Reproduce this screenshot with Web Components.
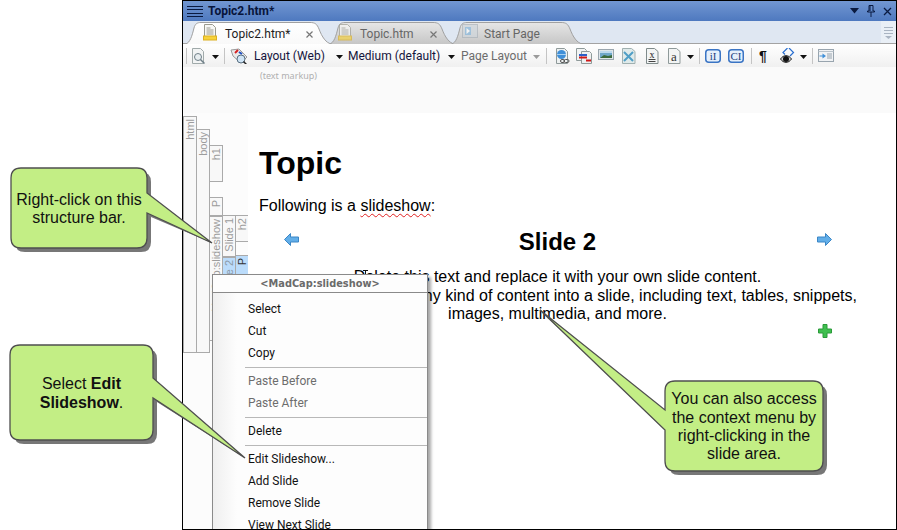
<!DOCTYPE html>
<html>
<head>
<meta charset="utf-8">
<title>Topic2.htm</title>
<style>
  html, body { margin: 0; height: 100%; background: #fff; overflow: hidden; }
  body { position: relative; font-family: "Liberation Sans", Arial, sans-serif; }
</style>
</head>
<body>
<app-window>
  <title-bar slot="top">Topic2.htm*</title-bar>
  <tab-strip slot="top">
    <doc-tab active w="147" icon="page" pad="40" close="120" style="margin-left:2px">Topic2.htm*</doc-tab>
    <doc-tab w="126" icon="page" pad="31" close="100" style="margin-left:-3px">Topic.htm</doc-tab>
    <doc-tab w="132" icon="start" pad="33" close="0" style="margin-left:-4px">Start Page</doc-tab>
  </tab-strip>
  <tool-bar slot="top">
    <tb-sep style="margin-left:3px"></tb-sep>
    <tb-icon name="find" style="margin-left:5px"></tb-icon>
    <tb-arrow style="margin-left:7px"></tb-arrow>
    <tb-sep style="margin-left:5px"></tb-sep>
    <tb-icon name="tag" style="margin-left:5px"></tb-icon>
    <tb-text w="82" style="margin-left:6px">Layout (Web)</tb-text>
    <tb-arrow></tb-arrow>
    <tb-text w="100" style="margin-left:5px">Medium (default)</tb-text>
    <tb-arrow></tb-arrow>
    <tb-text w="72" off style="margin-left:6px">Page Layout</tb-text>
    <tb-arrow off></tb-arrow>
    <tb-sep style="margin-left:6px"></tb-sep>
    <tb-icon name="link" style="margin-left:7px"></tb-icon>
    <tb-icon name="move" style="margin-left:6px"></tb-icon>
    <tb-icon name="image" style="margin-left:6px"></tb-icon>
    <tb-icon name="cross" style="margin-left:8px"></tb-icon>
    <tb-icon name="x" style="margin-left:10px"></tb-icon>
    <tb-icon name="a" style="margin-left:9px"></tb-icon>
    <tb-arrow style="margin-left:6px"></tb-arrow>
    <tb-sep style="margin-left:5px"></tb-sep>
    <tb-icon name="ii" style="margin-left:5px"></tb-icon>
    <tb-icon name="ci" style="margin-left:7px"></tb-icon>
    <tb-sep style="margin-left:7px"></tb-sep>
    <tb-icon name="para" style="margin-left:7px"></tb-icon>
    <tb-icon name="eye" style="margin-left:13px"></tb-icon>
    <tb-arrow style="margin-left:4px"></tb-arrow>
    <tb-sep style="margin-left:5px"></tb-sep>
    <tb-icon name="panel" style="margin-left:5px"></tb-icon>
  </tool-bar>
  <markup-strip slot="top">(text markup)</markup-strip>
  <structure-bars slot="side">
    <bar-col>
      <struct-bar top="3" h="237">html</struct-bar>
    </bar-col>
    <bar-col>
      <struct-bar top="16" h="224">body</struct-bar>
    </bar-col>
    <bar-col>
      <struct-bar top="32" h="37">h1</struct-bar>
      <struct-bar top="15" h="19">P</struct-bar>
      <struct-bar top="0" h="125">MadCap:slideshow</struct-bar>
    </bar-col>
    <bar-col>
      <struct-bar top="102" h="42">Slide 1</struct-bar>
      <struct-bar top="0" h="40" on>Slide 2</struct-bar>
    </bar-col>
    <bar-col>
      <struct-bar top="102" h="27">h2</struct-bar>
      <struct-bar top="13" h="40" on dark>P</struct-bar>
    </bar-col>
  </structure-bars>
  <topic-page slot="main">
    <span slot="title">Topic</span>
    <span slot="intro">Following is a <u>slideshow</u>:</span>
    <span slot="slide">Slide 2</span>
    <span slot="text">D<text-caret></text-caret>elete this text and replace it with your own slide content.<br>You can place almost any kind of content into a slide, including text, tables, snippets,<br>images, multimedia, and more.</span>
  </topic-page>
  <context-menu slot="over" heading="&lt;MadCap:slideshow&gt;">
    <menu-item>Select</menu-item>
    <menu-item>Cut</menu-item>
    <menu-item>Copy</menu-item>
    <menu-sep></menu-sep>
    <menu-item off>Paste Before</menu-item>
    <menu-item off>Paste After</menu-item>
    <menu-sep></menu-sep>
    <menu-item>Delete</menu-item>
    <menu-sep></menu-sep>
    <menu-item>Edit Slideshow...</menu-item>
    <menu-item>Add Slide</menu-item>
    <menu-item>Remove Slide</menu-item>
    <menu-item>View Next Slide</menu-item>
  </context-menu>
</app-window>

<call-out x="11" y="168" w="136" h="80" side="right" p1="25" p2="45" tipx="212" tipy="243">Right-click on this<br>structure bar.</call-out>
<call-out x="10" y="345" w="143" h="95" side="right" p1="33" p2="53" tipx="245" tipy="458">Select <b>Edit<br>Slideshow</b>.</call-out>
<call-out x="665" y="381" w="158" h="90" side="left" p1="29" p2="49" tipx="540" tipy="310">You can also access<br>the context menu by<br>right-clicking in the<br>slide area.</call-out>

<script>
const uiFont = 'Roboto, "Noto Sans", sans-serif';

class AppWindow extends HTMLElement {
  constructor() {
    super();
    this.attachShadow({ mode: "open" });
    this.shadowRoot.innerHTML = `
      <style>
        :host { display: flex; flex-direction: column; position: relative; box-sizing: border-box;
          width: 715px; height: 530px; margin-left: 182px; border: 1px solid #000; overflow: hidden; background: #fff; }
        .body { flex: 1; display: flex; min-height: 0; }
      </style>
      <slot name="top"></slot>
      <div class="body"><slot name="side"></slot><slot name="main"></slot></div>
      <slot name="over"></slot>
    `;
  }
}
customElements.define("app-window", AppWindow);

class TitleBar extends HTMLElement {
  constructor() {
    super();
    this.attachShadow({ mode: "open" });
    this.shadowRoot.innerHTML = `
      <style>
        :host { display: flex; align-items: center; height: 20px; flex: none; color: #07143a;
          background: linear-gradient(#7297d2, #4e79bf); font: bold 12px ${uiFont}; }
        .menu { margin: 0 5px 0 4px; }
        .grow { flex: 1; }
        .btns { display: flex; gap: 8px; margin-right: 4px; align-items: center; }
      </style>
      <svg class="menu" width="16" height="13" viewBox="0 0 16 13"><path d="M0 1.500h16M0 4.500h16M0 8.500h16M0 11.500h16" stroke="#0a1a40" stroke-width="1" fill="none"/></svg>
      <slot></slot>
      <span class="grow"></span>
      <div class="btns">
        <svg width="9" height="6" viewBox="0 0 9 6"><path d="M0 0h9L4.500 5.500z" fill="#0a1a40"/></svg>
        <svg width="8" height="12" viewBox="0 0 8 12"><path d="M2 .5h4v5.500h1.500v1h-7v-1H2zM4 7v5M3 1v5" stroke="#0a1a40" fill="none"/></svg>
        <svg width="9" height="9" viewBox="0 0 9 9"><path d="M1 1l7 7M8 1l-7 7" stroke="#0a1a40" stroke-width="1.300" fill="none"/></svg>
      </div>
    `;
  }
}
customElements.define("title-bar", TitleBar);

class TabStrip extends HTMLElement {
  constructor() {
    super();
    this.attachShadow({ mode: "open" });
    this.shadowRoot.innerHTML = `
      <style>
        :host { display: flex; align-items: flex-end; height: 23px; flex: none; background: #dfe7f2;
          box-shadow: inset 0 -1px 0 #a3a3a3; }
        .grow { flex: 1; }
        .more { width: 15px; height: 22px; background: #e9eff6; display: flex; align-items: center; justify-content: center; margin-bottom: 1px; }
      </style>
      <slot></slot>
      <span class="grow"></span>
      <div class="more">
        <svg width="9" height="14" viewBox="0 0 9 14"><path d="M0 2.500h9M0 5.500h9M0 8.500h9" stroke="#a9b4c2"/><path d="M1 11h7l-3.500 3z" fill="#a9b4c2"/></svg>
      </div>
    `;
  }
}
customElements.define("tab-strip", TabStrip);

const tabIcons = {
  page: `<svg width="14" height="17" viewBox="0 0 14 17"><path d="M1.500.5h8l3 3v9h-11z" fill="#f7f7f5" stroke="#9a9a8e"/><path d="M3.500 4h4M3.500 6h7M3.500 8h7M3.500 10h7" stroke="#9b9b90"/><rect x=".5" y="12" width="13" height="4" fill="#f7d23a" stroke="#dcb020"/></svg>`,
  start: `<svg width="16" height="14" viewBox="0 0 16 14"><rect x=".5" y=".5" width="15" height="13" fill="#cfd6dc" stroke="#a8b0b8"/><rect x="3" y="3" width="6" height="8" fill="#7fb4dd"/><path d="M4.500 4l3.500 3-3.500 3z" fill="#fff"/></svg>`,
};

class DocTab extends HTMLElement {
  constructor() {
    super();
    this.attachShadow({ mode: "open" });
  }
  connectedCallback() {
    const w = +this.getAttribute("w");
    const active = this.hasAttribute("active");
    const id = active ? "on" : "off";
    const close = +this.getAttribute("close");
    this.shadowRoot.innerHTML = `
      <style>
        :host { display: block; position: relative; flex: none; height: 22px; width: ${w}px; z-index: ${active ? 2 : 1};
          font: 12px ${uiFont}; color: ${active ? "#1c1c1c" : "#666"}; }
        svg.bg { position: absolute; left: 0; top: 0; }
        .row { position: relative; display: flex; align-items: center; height: 100%; box-sizing: border-box; padding-top: 2px; }
        .ico { position: absolute; left: ${+this.getAttribute("pad") - 22}px; top: 2px; ${active ? "" : "opacity:.65;"} }
        .label { margin-left: ${this.getAttribute("pad")}px; }
        .x { position: absolute; left: ${close}px; top: 1px; width: 9px; font-size: 0; height: 100%; display: flex; align-items: center; }
      </style>
      <svg class="bg" width="${w}" height="22" viewBox="0 0 ${w} 22">
        <defs><linearGradient id="${id}" x1="0" y1="0" x2="0" y2="1">
          <stop offset="0" stop-color="${active ? "#fff" : "#e6e6e6"}"/>
          <stop offset="1" stop-color="${active ? "#f9f9f9" : "#c6c6c6"}"/>
        </linearGradient></defs>
        <path d="M.5 22C5 21 7 14 9 6C10 2 12 .5 16 .5H${w - 22}C${w - 17} .5 ${w - 15} 2 ${w - 13} 7C${w - 10} 15 ${w - 6} 21 ${w - .5} 22"
          fill="url(#${id})" stroke="#a0a0a0"/>
      </svg>
      <div class="row">
        <span class="ico">${tabIcons[this.getAttribute("icon")]}</span>
        <span class="label"><slot></slot></span>
        ${close ? `<span class="x"><svg width="9" height="9" viewBox="0 0 9 9"><path d="M1.500 1.500l6 6M7.500 1.500l-6 6" stroke="#777" stroke-width="1.200"/></svg></span>` : ""}
      </div>
    `;
  }
}
customElements.define("doc-tab", DocTab);

class ToolBar extends HTMLElement {
  constructor() {
    super();
    this.attachShadow({ mode: "open" });
    this.shadowRoot.innerHTML = `
      <style>
        :host { display: flex; align-items: center; height: 23px; flex: none; background: linear-gradient(#fff, #f0f0f0); }
      </style>
      <slot></slot>
    `;
  }
}
customElements.define("tool-bar", ToolBar);

class TbSep extends HTMLElement {
  constructor() {
    super();
    this.attachShadow({ mode: "open" });
    this.shadowRoot.innerHTML = `<style>:host { display: block; flex: none; width: 1px; height: 16px; background: #c4c4c4; }</style>`;
  }
}
customElements.define("tb-sep", TbSep);

class TbArrow extends HTMLElement {
  constructor() {
    super();
    this.attachShadow({ mode: "open" });
  }
  connectedCallback() {
    const c = this.hasAttribute("off") ? "#9a9a9a" : "#111";
    this.shadowRoot.innerHTML = `<style>:host { display: block; flex: none; width: 7px; height: 4px; line-height: 0; }</style>
      <svg width="7" height="4" viewBox="0 0 7 4"><path d="M0 0h7L3.500 4z" fill="${c}"/></svg>`;
  }
}
customElements.define("tb-arrow", TbArrow);

class TbText extends HTMLElement {
  constructor() {
    super();
    this.attachShadow({ mode: "open" });
  }
  connectedCallback() {
    this.shadowRoot.innerHTML = `<style>:host { display: block; flex: none; width: ${this.getAttribute("w")}px; white-space: nowrap;
      font: 12px ${uiFont}; color: ${this.hasAttribute("off") ? "#6c6c6c" : "#14143c"}; }</style><slot></slot>`;
  }
}
customElements.define("tb-text", TbText);

const page = `<path d="M2.500.5h8l3 3v12h-11z" fill="#eef1f1" stroke="#8f9a9a"/>`;
const toolIcons = {
  find: [13, `<path d="M.5.500h8l3 3v12h-11z" fill="#f2f4f4" stroke="#a0aaaa"/><circle cx="6" cy="9" r="3.500" fill="#e8eef0" stroke="#6f7f88"/><path d="M8.500 11.500l4 4" stroke="#6f7f88" stroke-width="1.500"/>`],
  tag: [18, `<path d="M1 2l8-1 8 8-6 6-8-7z" fill="#e9e9e9" stroke="#9a9a9a"/><circle cx="11" cy="11" r="4" fill="#cfe4f5" stroke="#5a6f80"/><path d="M5 5l3-3" stroke="#d42020" stroke-width="2"/><path d="M9 4l3 2" stroke="#2050c0" stroke-width="2"/><path d="M13.500 13.500l3 3" stroke="#222" stroke-width="1.500"/>`],
  link: [16, page + `<circle cx="7.500" cy="6.500" r="4.500" fill="#3f8fd8"/><path d="M3 6.500h9" stroke="#a9d0f0"/><rect x="6.500" y="11.500" width="4" height="3" rx="1.500" fill="none" stroke="#555"/><rect x="10" y="11.500" width="5" height="3" rx="1.500" fill="none" stroke="#555"/>`],
  move: [16, `<path d="M.5.500h8l2 2v10h-10z" fill="#f2f4f4" stroke="#8f9a9a"/><path d="M5.500 3.500h8l2 2v10h-10z" fill="#eef1f1" stroke="#8f9a9a"/><path d="M3 7h8" stroke="#2b5fc8" stroke-width="2"/><path d="M3 9.500h8" stroke="#d01818" stroke-width="2"/><path d="M10 12.500h5" stroke="#d01818" stroke-width="2"/>`],
  image: [16, `<rect x=".5" y="1.500" width="15" height="10" fill="#dfe6ea" stroke="#9aa6ae"/><rect x="2" y="3" width="12" height="7" fill="#6fa7c9"/><path d="M2 10l4-3 4 1 4-1v3z" fill="#3b6a3c"/><path d="M2 3h12v2H2z" fill="#bcd9ee"/>`],
  cross: [14, `<path d="M.5.500h9l3.500 3v12H.5z" fill="#dfeaea" stroke="#a0b0b0"/><path d="M2 4l9 9M11 4l-9 9" stroke="#4f9ec6" stroke-width="2"/>`],
  x: [13, `<path d="M.5.500h8l3.500 3v12H.5z" fill="#f2f4f4" stroke="#7f8a8a"/><text x="6" y="10" font-family="Liberation Serif" font-size="10" text-anchor="middle" fill="#222">x</text><path d="M2.500 11.500h7M2.500 13.500h7" stroke="#444"/>`],
  a: [13, `<path d="M.5.500h8l3.500 3v12H.5z" fill="#f2f4f4" stroke="#8f9a9a"/><text x="6" y="13" font-family="Liberation Serif" font-size="13" text-anchor="middle" fill="#333">a</text>`],
  ii: [16, `<rect x=".75" y="1.750" width="14.500" height="12.500" rx="3" fill="#e6f0fb" stroke="#3a74c4" stroke-width="1.500"/><text x="8" y="12" font-family="Liberation Serif" font-size="11" text-anchor="middle" fill="#1c3f80">iI</text>`],
  ci: [16, `<rect x=".75" y="1.750" width="14.500" height="12.500" rx="3" fill="#e6f0fb" stroke="#3a74c4" stroke-width="1.500"/><text x="8" y="12" font-family="Liberation Serif" font-size="11" text-anchor="middle" fill="#1c3f80">CI</text>`],
  para: [8, `<text x="4" y="13" font-family="Liberation Sans" font-weight="bold" font-size="14" text-anchor="middle" fill="#111">¶</text>`],
  eye: [16, `<path d="M7.500 0L3 4.500l2 2M9 0l4.500 4.500L10 8" stroke="#2a6fd0" stroke-width="1.200" fill="none"/><path d="M.5 11c3-4.500 8-4.500 11 0-3 4.500-8 4.500-11 0z" fill="#ccc" stroke="#222"/><circle cx="6" cy="11" r="3" fill="#111"/>`],
  panel: [16, `<rect x=".5" y="1.500" width="15" height="12" fill="#f0f2f4" stroke="#98a4ae"/><path d="M.5 3.500h15" stroke="#b8c2ca"/><path d="M9 6h5M9 8h5M9 10h5" stroke="#98a4ae"/><path d="M1.500 7.500h3v-2l3.500 2.500-3.500 2.500v-2h-3z" fill="#3f8fd8"/>`],
};

class TbIcon extends HTMLElement {
  constructor() {
    super();
    this.attachShadow({ mode: "open" });
  }
  connectedCallback() {
    const [w, body] = toolIcons[this.getAttribute("name")];
    this.shadowRoot.innerHTML = `<style>:host { display: block; flex: none; width: ${w}px; height: 16px; line-height: 0; }</style>
      <svg width="${w}" height="16" viewBox="0 0 ${w} 16">${body}</svg>`;
  }
}
customElements.define("tb-icon", TbIcon);

class MarkupStrip extends HTMLElement {
  constructor() {
    super();
    this.attachShadow({ mode: "open" });
    this.shadowRoot.innerHTML = `
      <style>
        :host { display: block; height: 46px; flex: none; box-sizing: border-box; padding: 3px 0 0 77px;
          background: #fafafa; color: #b0b0b0; font: 9px/12px "Noto Sans", sans-serif; }
      </style>
      <slot></slot>
    `;
  }
}
customElements.define("markup-strip", MarkupStrip);

class StructureBars extends HTMLElement {
  constructor() {
    super();
    this.attachShadow({ mode: "open" });
    this.shadowRoot.innerHTML = `
      <style>
        :host { display: flex; flex: none; width: 65px; background: #fcfcfc; padding-left: 0; align-items: flex-start; }
      </style>
      <slot></slot>
    `;
  }
}
customElements.define("structure-bars", StructureBars);

class BarCol extends HTMLElement {
  constructor() {
    super();
    this.attachShadow({ mode: "open" });
    this.shadowRoot.innerHTML = `
      <style>:host { display: flex; flex-direction: column; flex: none; width: 13px; }</style>
      <slot></slot>
    `;
  }
}
customElements.define("bar-col", BarCol);

class StructBar extends HTMLElement {
  constructor() {
    super();
    this.attachShadow({ mode: "open" });
  }
  connectedCallback() {
    const on = this.hasAttribute("on");
    this.shadowRoot.innerHTML = `
      <style>
        :host { display: flex; justify-content: center; align-items: flex-start; flex: none; box-sizing: border-box; overflow: hidden;
          width: 14px; height: ${this.getAttribute("h")}px; margin-top: ${this.getAttribute("top")}px; padding-top: 2px;
          border: 1px solid #aaa; background: ${on ? "#bbdcfb" : "#f8f8f8"};
          color: ${this.hasAttribute("dark") ? "#333" : on ? "#8c9aa8" : "#9c9c9c"}; font: 11px/12px "Liberation Sans", sans-serif; }
        span { writing-mode: vertical-rl; transform: rotate(180deg); white-space: nowrap; }
      </style>
      <span><slot></slot></span>
    `;
  }
}
customElements.define("struct-bar", StructBar);

class TopicPage extends HTMLElement {
  constructor() {
    super();
    this.attachShadow({ mode: "open" });
    this.shadowRoot.innerHTML = `
      <style>
        :host { display: block; flex: 1; min-width: 0; box-sizing: border-box; padding: 32px 0 0 11px; color: #000;
          font: 16px/18.4px "Liberation Sans", Arial, sans-serif; background: #fff; }
        h1 { margin: 0; font-size: 32px; line-height: 37px; font-weight: bold; }
        p { margin: 0; }
        .intro { margin-top: 15px; }
        .nav { display: flex; align-items: flex-start; justify-content: space-between; height: 28px; margin: 13px 64px 0 25px; }
        .nav svg { margin-top: 5px; }
        h2 { margin: 0 0 0 -1px; font-size: 24px; line-height: 28px; font-weight: bold; }
        .text { margin: 12px 40px 0 0; text-align: center; white-space: nowrap; }
        .add { display: flex; justify-content: flex-end; margin: 0 64px 0 0; }
      </style>
      <h1><slot name="title"></slot></h1>
      <p class="intro"><slot name="intro"></slot></p>
      <div class="nav">
        <svg width="15" height="13" viewBox="0 0 15 13"><path d="M.5 6.500L6.500.5v3.500h8v5h-8v3.500z" fill="#62aee8" stroke="#3b86c6"/></svg>
        <h2><slot name="slide"></slot></h2>
        <svg width="15" height="13" viewBox="0 0 15 13"><path d="M14.500 6.500L8.500.5v3.500h-8v5h8v3.500z" fill="#62aee8" stroke="#3b86c6"/></svg>
      </div>
      <p class="text"><slot name="text"></slot></p>
      <div class="add">
        <svg width="14" height="14" viewBox="0 0 14 14"><path d="M5 .5h4v4.500h4.500v4H9v4.500H5V9H.5V5H5z" fill="#3fbf4f" stroke="#2b9a3a"/></svg>
      </div>
    `;
  }
  connectedCallback() {
    // wavy spell-check line on the word, styled here since it is light DOM text
    const u = this.querySelector("u");
    if (u) u.style.cssText = "text-decoration: underline wavy #e02020 1px; text-underline-offset: 2px;";
  }
}
customElements.define("topic-page", TopicPage);

// mouse I-beam that sits over the first line of the slide text
class TextCaret extends HTMLElement {
  constructor() {
    super();
    this.attachShadow({ mode: "open" });
    this.shadowRoot.innerHTML = `
      <style>
        :host { display: inline-block; position: relative; width: 0; height: 0; }
        svg { position: absolute; left: -2px; top: -12px; }
      </style>
      <svg width="5" height="15" viewBox="0 0 5 15"><path d="M0 .5h5M0 14.500h5M2.500 0v15" stroke="#111"/></svg>
    `;
  }
}
customElements.define("text-caret", TextCaret);

class ContextMenu extends HTMLElement {
  constructor() {
    super();
    this.attachShadow({ mode: "open" });
  }
  connectedCallback() {
    this.shadowRoot.innerHTML = `
      <style>
        :host { display: block; position: absolute; left: 29px; top: 273px; width: 216px; height: 270px; box-sizing: border-box;
          border: 1px solid #8a8a8a; box-shadow: 3px 3px 3px rgba(0,0,0,.35); z-index: 5;
          background: linear-gradient(90deg, #efefef, #fdfdfd 24px); font: 12px ${uiFont}; }
        .head { height: 18px; box-sizing: border-box; border-bottom: 1px solid #8a8a8a; background: #fdfdfd;
          text-align: center; font: bold 9.800px/17px "DejaVu Sans", sans-serif; color: #6a6a6a; }
        .list { padding-top: 5px; }
      </style>
      <div class="head">${this.getAttribute("heading").replace("<", "&lt;")}</div>
      <div class="list"><slot></slot></div>
    `;
  }
}
customElements.define("context-menu", ContextMenu);

class MenuItem extends HTMLElement {
  constructor() {
    super();
    this.attachShadow({ mode: "open" });
  }
  connectedCallback() {
    this.shadowRoot.innerHTML = `
      <style>
        :host { display: block; height: 22px; padding-left: 35px; line-height: 22px; white-space: nowrap;
          color: ${this.hasAttribute("off") ? "#6d6d6d" : "#111"}; }
      </style>
      <slot></slot>
    `;
  }
}
customElements.define("menu-item", MenuItem);

class MenuSep extends HTMLElement {
  constructor() {
    super();
    this.attachShadow({ mode: "open" });
    this.shadowRoot.innerHTML = `
      <style>
        :host { display: block; height: 6px; padding: 3px 0 0 32px; box-sizing: border-box; }
        div { height: 1px; background: #b8b8b8; }
      </style>
      <div></div>
    `;
  }
}
customElements.define("menu-sep", MenuSep);

class CallOut extends HTMLElement {
  constructor() {
    super();
    this.attachShadow({ mode: "open" });
  }
  connectedCallback() {
    const n = (a) => +this.getAttribute(a);
    const x = n("x"), y = n("y"), w = n("w"), h = n("h"), p1 = n("p1"), p2 = n("p2");
    const tx = n("tipx") - x, ty = n("tipy") - y;
    const right = this.getAttribute("side") === "right";
    const r = 10;
    const shape = (o, tipx, tipy) => {
      const L = o, T = o, R = w + o, B = h + o;
      return `M${L + r} ${T}H${R - r}Q${R} ${T} ${R} ${T + r}` +
        (right ? `V${p1 + o}L${tipx} ${tipy}L${R} ${p2 + o}` : "") +
        `V${B - r}Q${R} ${B} ${R - r} ${B}H${L + r}Q${L} ${B} ${L} ${B - r}` +
        (right ? "" : `V${p2 + o}L${tipx} ${tipy}L${L} ${p1 + o}`) +
        `V${T + r}Q${L} ${T} ${L + r} ${T}Z`;
    };
    this.shadowRoot.innerHTML = `
      <style>
        :host { display: flex; align-items: center; justify-content: center; position: absolute; z-index: 10;
          left: ${x}px; top: ${y}px; width: ${w}px; height: ${h}px; text-align: center; color: #111;
          font: 16px/18.4px "Liberation Sans", Arial, sans-serif; }
        svg { position: absolute; left: 0; top: 0; overflow: visible; }
        span { position: relative; padding-top: 2px; }
      </style>
      <svg width="${w}" height="${h}">
        <path d="${shape(4, tx, ty)}" fill="#777"/>
        <path d="${shape(0, tx, ty)}" fill="#c3ee85" stroke="#4f4f4f" stroke-width="1.300"/>
      </svg>
      <span><slot></slot></span>
    `;
  }
}
customElements.define("call-out", CallOut);
</script>
</body>
</html>
